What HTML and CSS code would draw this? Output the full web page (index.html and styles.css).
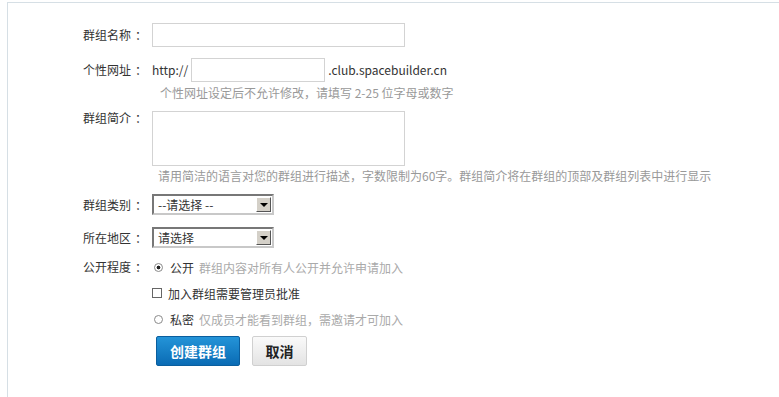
FILE: index.html
```html
<!DOCTYPE html>
<html>
<head>
    <title>创建群组</title>
    <link rel="stylesheet" href="styles.css">
</head>
<body>
    <div class="panel">
        <form class="group-form">
            <div class="form-row row-name">
                <label class="form-label" for="group_name">群组名称<span class="colon">：</span></label>
                <div class="form-field">
                    <input type="text" id="group_name" class="text-input wide">
                </div>
            </div>

            <div class="form-row row-url">
                <label class="form-label" for="group_url">个性网址<span class="colon">：</span></label>
                <div class="form-field">
                    <div class="url-line">
                        <span>http://</span>
                        <input type="text" id="group_url" class="text-input short">
                        <span>.club.spacebuilder.cn</span>
                    </div>
                    <div class="hint">个性网址设定后不允许修改，请填写 2-25 位字母或数字</div>
                </div>
            </div>

            <div class="form-row row-intro">
                <label class="form-label label-top" for="group_intro">群组简介<span class="colon">：</span></label>
                <div class="form-field">
                    <textarea id="group_intro" class="text-area"></textarea>
                    <div class="hint hint-intro">请用简洁的语言对您的群组进行描述，字数限制为60字。群组简介将在群组的顶部及群组列表中进行显示</div>
                </div>
            </div>

            <div class="form-row row-select">
                <label class="form-label label-select" for="group_type">群组类别<span class="colon">：</span></label>
                <div class="form-field">
                    <span class="select-box">
                        <select id="group_type"><option>--请选择 --</option></select>
                        <span class="select-arrow"></span>
                    </span>
                </div>
            </div>

            <div class="form-row row-select">
                <label class="form-label label-select" for="group_area">所在地区<span class="colon">：</span></label>
                <div class="form-field">
                    <span class="select-box">
                        <select id="group_area"><option>请选择</option></select>
                        <span class="select-arrow"></span>
                    </span>
                </div>
            </div>

            <div class="form-row row-privacy">
                <span class="form-label label-option">公开程度<span class="colon">：</span></span>
                <div class="form-field">
                    <label class="option-line">
                        <input type="radio" name="privacy" class="radio" checked>
                        <span class="option-name">公开</span>
                        <span class="option-desc">群组内容对所有人公开并允许申请加入</span>
                    </label>
                    <label class="option-line">
                        <input type="checkbox" class="check">
                        <span class="option-name">加入群组需要管理员批准</span>
                    </label>
                    <label class="option-line">
                        <input type="radio" name="privacy" class="radio">
                        <span class="option-name">私密</span>
                        <span class="option-desc">仅成员才能看到群组，需邀请才可加入</span>
                    </label>
                </div>
            </div>

            <div class="form-row">
                <span></span>
                <div class="form-field buttons">
                    <button type="submit" class="btn btn-primary">创建群组</button>
                    <button type="button" class="btn btn-cancel">取消</button>
                </div>
            </div>
        </form>
    </div>
</body>
</html>
```

FILE: styles.css
```css
body {
    margin: 0;
    font-family: "Microsoft YaHei", "Noto Sans CJK SC", sans-serif;
    font-size: 12px;
    color: #333;
    background: #fff;
}
.panel {
    margin: 2px 0 0 7px;
    border-top: 1px solid #d6dfe5;
    border-left: 1px solid #d6dfe5;
    height: 400px;
}
.group-form {
    padding-top: 20px;
}
.form-row {
    display: grid;
    grid-template-columns: 144px 1fr;
    align-items: start;
    margin-bottom: 11px;
}
.form-label {
    text-align: right;
    padding-right: 9px;
    line-height: 24px;
    white-space: nowrap;
}
.colon {
    display: inline-block;
    width: 12px;
    padding-left: 4px;
    box-sizing: border-box;
    overflow: visible;
}
.label-top {
    line-height: 14px;
}
.label-select {
    line-height: 21px;
}
.label-option {
    line-height: 26px;
}
.form-field {
    display: flex;
    flex-direction: column;
    align-items: flex-start;
}
.text-input,
.text-area {
    box-sizing: border-box;
    border: 1px solid #d3d3d3;
    font-family: inherit;
    font-size: 12px;
    padding: 2px 4px;
    margin: 0;
    outline: none;
}
.text-input {
    height: 24px;
}
.wide {
    width: 253px;
}
.short {
    width: 134px;
    margin: 0 3px 0 3px;
}
.text-area {
    width: 253px;
    height: 55px;
    resize: none;
    display: block;
}
.url-line {
    display: flex;
    align-items: center;
    line-height: 24px;
}
.hint {
    color: #999;
    line-height: 18px;
    margin-top: 2px;
    padding-left: 8px;
}
.row-url {
    margin-bottom: 9px;
}
.hint-intro {
    padding-left: 6px;
    margin-top: 1px;
}
.row-intro {
    margin-bottom: 9px;
}
.row-select {
    margin-bottom: 12px;
}
.row-select + .row-privacy {
    margin-top: -6px;
    margin-bottom: 4px;
}
.select-box {
    display: inline-flex;
    box-sizing: border-box;
    width: 122px;
    height: 21px;
    border: 2px solid #777;
    border-right-color: #c8c8c8;
    border-bottom-color: #c8c8c8;
    background: #fff;
    padding: 1px;
}
.select-box select {
    appearance: none;
    -webkit-appearance: none;
    flex: 1;
    min-width: 0;
    border: none;
    background: #fff;
    font-family: inherit;
    font-size: 12px;
    color: #333;
    padding: 0 3px;
    margin: 0;
    outline: none;
    line-height: 15px;
}
.select-arrow {
    width: 15px;
    box-sizing: border-box;
    background: #d4d0c8;
    border: 1px solid #fff;
    border-right-color: #555;
    border-bottom-color: #555;
    display: flex;
    align-items: center;
    justify-content: center;
}
.select-arrow::after {
    content: "";
    border-left: 4px solid transparent;
    border-right: 4px solid transparent;
    border-top: 4px solid #000;
    margin-top: 1px;
}
.option-line {
    display: flex;
    align-items: center;
    height: 26px;
}
.radio,
.check {
    appearance: none;
    -webkit-appearance: none;
    margin: 0;
    box-sizing: border-box;
    background: #fff;
}
.radio {
    width: 9px;
    height: 9px;
    margin-left: 2px;
    margin-right: 7px;
    border: 1px solid #8a8a8a;
    border-radius: 50%;
}
.radio:checked {
    background: radial-gradient(circle, #222 0, #222 1.6px, #fff 2.2px);
}
.check {
    width: 10px;
    height: 10px;
    margin-right: 6px;
    border: 1px solid #666;
}
.option-name {
    color: #333;
}
.option-desc {
    color: #aaa;
    margin-left: 5px;
}
.buttons {
    flex-direction: row;
    padding-left: 4px;
    gap: 12px;
}
.btn {
    height: 30px;
    font-family: inherit;
    font-size: 14px;
    font-weight: bold;
    border-radius: 2px;
    cursor: pointer;
    padding: 0;
}
.btn-primary {
    width: 84px;
    color: #fff;
    border: 1px solid #0a5e9e;
    background: linear-gradient(#2494d8, #0a6bb4);
}
.btn-cancel {
    width: 55px;
    color: #222;
    border: 1px solid #d0d0d0;
    background: linear-gradient(#fafafa, #e3e3e3);
}
```
